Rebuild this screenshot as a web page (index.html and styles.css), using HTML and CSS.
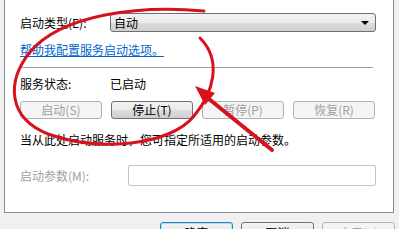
FILE: index.html
```html
<!DOCTYPE html>
<html lang="zh-CN">
<head>
  <meta charset="utf-8" />
  <title>服务属性</title>
  <link rel="stylesheet" href="styles.css">
</head>
<body>
  <div class="dialog">
    <div class="panel">
      <div class="row row-type">
        <label class="label">启动类型(E):</label>
        <div class="combo"><span>自动</span><span class="combo-arrow"></span></div>
      </div>
      <a class="help-link" href="#">帮助我配置服务启动选项。</a>
      <hr class="sep">
      <div class="row row-status">
        <span class="label">服务状态:</span>
        <span>已启动</span>
      </div>
      <div class="btn-row">
        <button class="btn" disabled>启动(S)</button>
        <button class="btn">停止(T)</button>
        <button class="btn" disabled>暂停(P)</button>
        <button class="btn" disabled>恢复(R)</button>
      </div>
      <p class="hint">当从此处启动服务时，您可指定所适用的启动参数。</p>
      <div class="row row-param">
        <label class="label label-param disabled">启动参数(M):</label>
        <input class="param" type="text" disabled>
      </div>
    </div>

    <div class="footer">
      <button class="btn btn-foot btn-default">确定</button>
      <button class="btn btn-foot">取消</button>
      <button class="btn btn-foot" disabled>应用(A)</button>
    </div>

    <!-- red marker drawn over the screenshot -->
    <svg class="markup" width="399" height="229" viewBox="0 0 399 229">
      <path d="M204 11 C140 5, 62 14, 30 52 C6 82, 8 118, 48 134 C98 152, 170 146, 194 116 C214 92, 222 60, 200 38"
            fill="none" stroke="#d8121c" stroke-width="3" stroke-linecap="round"/>
      <path d="M272 150 L209 99" stroke="#d8121c" stroke-width="4" stroke-linecap="round"/>
      <polygon points="195,86 215,93 205,105" fill="#d8121c"/>
    </svg>
  </div>
</body>
</html>
```

FILE: styles.css
```css
:root{
  --text:#000;
  --muted:#a0a0a0;
  --link:#0066cc;
  --frame:#898c95;
  --btn-border:#707070;
  --btn-border-off:#adb2b5;
  --red:#d8121c;
}

html,body{height:100%}
body{
  margin:0; background:#f0f0f0; color:var(--text);
  font-family:"Noto Sans CJK SC","Noto Sans",sans-serif; font-size:12px;
  overflow:hidden;
}

.dialog{ position:relative; width:399px; height:229px; }

.panel{
  margin-left:4px; width:390px; box-sizing:border-box;
  padding:13px 0 26px 15px;
  background:#fff;
  border:1px solid var(--frame); border-top:none;
}

.row{ display:flex; align-items:center; }
.label{ width:90px; flex:none; line-height:19px; }
.label-param{ width:108px; }
.disabled{ color:var(--muted); }

.combo{
  width:266px; height:19px; box-sizing:border-box;
  display:flex; align-items:center; justify-content:space-between;
  padding:0 6px 0 3px;
  border:1px solid var(--btn-border); border-radius:3px;
  background:linear-gradient(180deg,#f3f3f3 0%,#ebebeb 50%,#dddddd 51%,#cfcfcf 100%);
}
.combo-arrow{
  width:0; height:0;
  border-left:4px solid transparent; border-right:4px solid transparent;
  border-top:4px solid #000;
}

.help-link{
  display:block; margin-top:10px; line-height:16px;
  color:var(--link); text-decoration:underline;
}

.sep{
  width:353px; margin:9px 0 0; height:0;
  border:none; border-top:1px solid #a0a0a0;
}

.row-status{ margin-top:8px; line-height:16px; }
.row-status .label{ line-height:16px; }

.btn-row{ display:flex; gap:9px; margin-top:9px; }

.btn{
  width:82px; height:18px; padding:0; box-sizing:border-box;
  font:inherit; color:var(--text); line-height:16px;
  border:1px solid var(--btn-border); border-radius:3px;
  background:linear-gradient(180deg,#f2f2f2 0%,#ebebeb 50%,#dddddd 51%,#cfcfcf 100%);
}
.btn:disabled{
  color:var(--muted); border-color:var(--btn-border-off); background:#f4f4f4;
}

.hint{ margin:13px 0 0; line-height:16px; }

.row-param{ margin-top:17px; }
.row-param .label{ line-height:21px; }
.param{
  width:248px; height:21px; box-sizing:border-box; margin:0;
  border:1px solid #c5c5c5; border-radius:2px; background:#fff;
}

.footer{
  display:flex; justify-content:flex-end; gap:8px;
  margin-top:9px; padding-right:4px;
}
.btn-foot{ width:73px; height:22px; }
.btn-default{
  border-color:#3c7fb1;
  box-shadow:inset 0 0 0 1px #a8e0fb;
}

.markup{ position:absolute; left:0; top:0; pointer-events:none; }
```
